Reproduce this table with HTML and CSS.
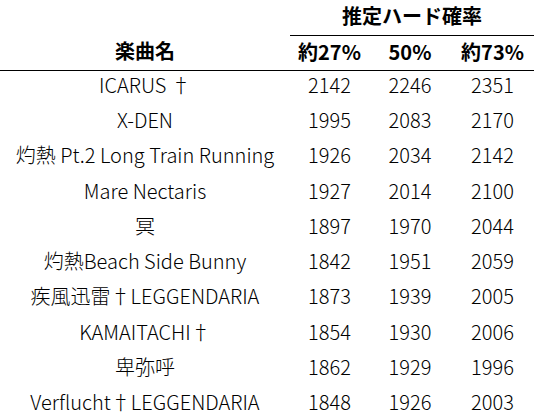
FILE: index.html
```html
<!DOCTYPE html>
<html lang="ja">
<head>
<meta charset="utf-8">
<link rel="stylesheet" href="styles.css">
</head>
<body>
<table class="scores">
  <colgroup>
    <col class="c-name">
    <col class="c-a">
    <col class="c-b">
    <col class="c-c">
  </colgroup>
  <thead>
    <tr class="h1">
      <th class="blank"></th>
      <th class="group" colspan="3">推定ハード確率</th>
    </tr>
    <tr class="h2">
      <th>楽曲名</th>
      <th>約27%</th>
      <th>50%</th>
      <th>約73%</th>
    </tr>
  </thead>
  <tbody>
    <tr><td>ICARUS †</td><td>2142</td><td>2246</td><td>2351</td></tr>
    <tr><td>X-DEN</td><td>1995</td><td>2083</td><td>2170</td></tr>
    <tr><td>灼熱 Pt.2 Long Train Running</td><td>1926</td><td>2034</td><td>2142</td></tr>
    <tr><td>Mare Nectaris</td><td>1927</td><td>2014</td><td>2100</td></tr>
    <tr><td>冥</td><td>1897</td><td>1970</td><td>2044</td></tr>
    <tr><td>灼熱Beach Side Bunny</td><td>1842</td><td>1951</td><td>2059</td></tr>
    <tr><td>疾風迅雷†LEGGENDARIA</td><td>1873</td><td>1939</td><td>2005</td></tr>
    <tr><td>KAMAITACHI†</td><td>1854</td><td>1930</td><td>2006</td></tr>
    <tr><td>卑弥呼</td><td>1862</td><td>1929</td><td>1996</td></tr>
    <tr><td>Verflucht†LEGGENDARIA</td><td>1848</td><td>1926</td><td>2003</td></tr>
  </tbody>
</table>
</body>
</html>
```
FILE: styles.css
```css
html, body {
  margin: 0;
  padding: 0;
  background: #fff;
}
body {
  font-family: "Noto Sans CJK JP", "Noto Sans", sans-serif;
  font-size: 20px;
  color: #000;
}
.scores {
  width: 534px;
  border-collapse: collapse;
  table-layout: fixed;
}
.c-name { width: 290px; }
.c-a { width: 79px; }
.c-b { width: 82px; }
.c-c { width: 83px; }
.scores th {
  font-weight: 700;
  padding: 0 0 2px;
  text-align: center;
  vertical-align: middle;
  line-height: 24px;
  box-sizing: border-box;
}
.h1 th { height: 35px; }
.h1 .group { border-bottom: 1px solid #000; }
.h2 th { height: 35px; border-bottom: 1px solid #000; }
.scores td {
  font-weight: 300;
  padding: 0 0 6px;
  height: 35.3px;
  box-sizing: border-box;
  text-align: center;
  vertical-align: middle;
  line-height: 24px;
  white-space: nowrap;
}
```
